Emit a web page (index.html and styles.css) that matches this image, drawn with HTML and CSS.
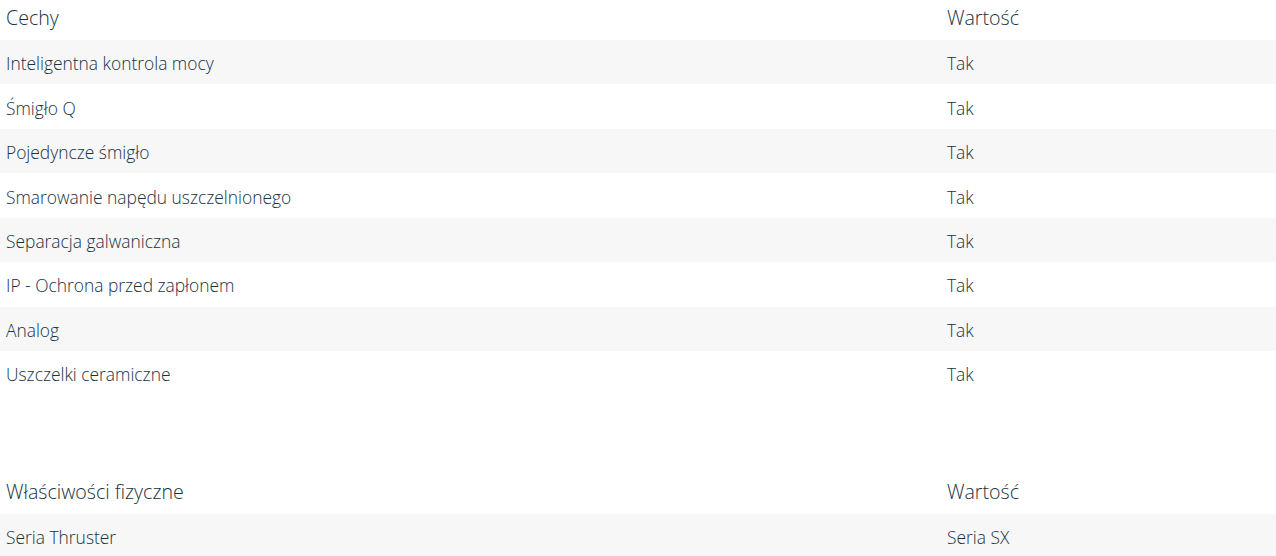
FILE: index.html
```html
<!DOCTYPE html>
<html lang="pl">
<head>
<meta charset="utf-8">
<title>Cechy</title>
<link rel="stylesheet" href="styles.css">
</head>
<body>
<main class="specs">
  <section class="spec-table first">
    <div class="row head"><div class="cell">Cechy</div><div class="cell">Wartość</div></div>
    <div class="row"><div class="cell">Inteligentna kontrola mocy</div><div class="cell">Tak</div></div>
    <div class="row"><div class="cell">Śmigło Q</div><div class="cell">Tak</div></div>
    <div class="row"><div class="cell">Pojedyncze śmigło</div><div class="cell">Tak</div></div>
    <div class="row"><div class="cell">Smarowanie napędu uszczelnionego</div><div class="cell">Tak</div></div>
    <div class="row"><div class="cell">Separacja galwaniczna</div><div class="cell">Tak</div></div>
    <div class="row"><div class="cell">IP - Ochrona przed zapłonem</div><div class="cell">Tak</div></div>
    <div class="row"><div class="cell">Analog</div><div class="cell">Tak</div></div>
    <div class="row"><div class="cell">Uszczelki ceramiczne</div><div class="cell">Tak</div></div>
  </section>
  <section class="spec-table second">
    <div class="row head"><div class="cell">Właściwości fizyczne</div><div class="cell">Wartość</div></div>
    <div class="row"><div class="cell">Seria Thruster</div><div class="cell">Seria SX</div></div>
  </section>
</main>
</body>
</html>
```
FILE: styles.css
```css
html, body {
  margin: 0;
  padding: 0;
  background: #ffffff;
}
body {
  font-family: "Open Sans", "Noto Sans", sans-serif;
  color: #163243;
  overflow: hidden;
}
.specs {
  display: flex;
  flex-direction: column;
}
.spec-table {
  display: flex;
  flex-direction: column;
}
.spec-table.first {
  margin-top: -4px;
}
.spec-table.second {
  margin-top: 74.5px;
}
.row {
  display: grid;
  grid-template-columns: 941px 1fr;
  font-size: 17.4px;
  font-weight: 300;
  line-height: 24px;
}
.row:nth-child(even) {
  background: #f7f7f7;
}
.cell {
  padding: 11.22px 6px 9.22px;
}
.row.head {
  font-size: 19.6px;
  line-height: 24px;
}
.row.head .cell {
  padding: 9.5px 6px 10.5px;
}
```
